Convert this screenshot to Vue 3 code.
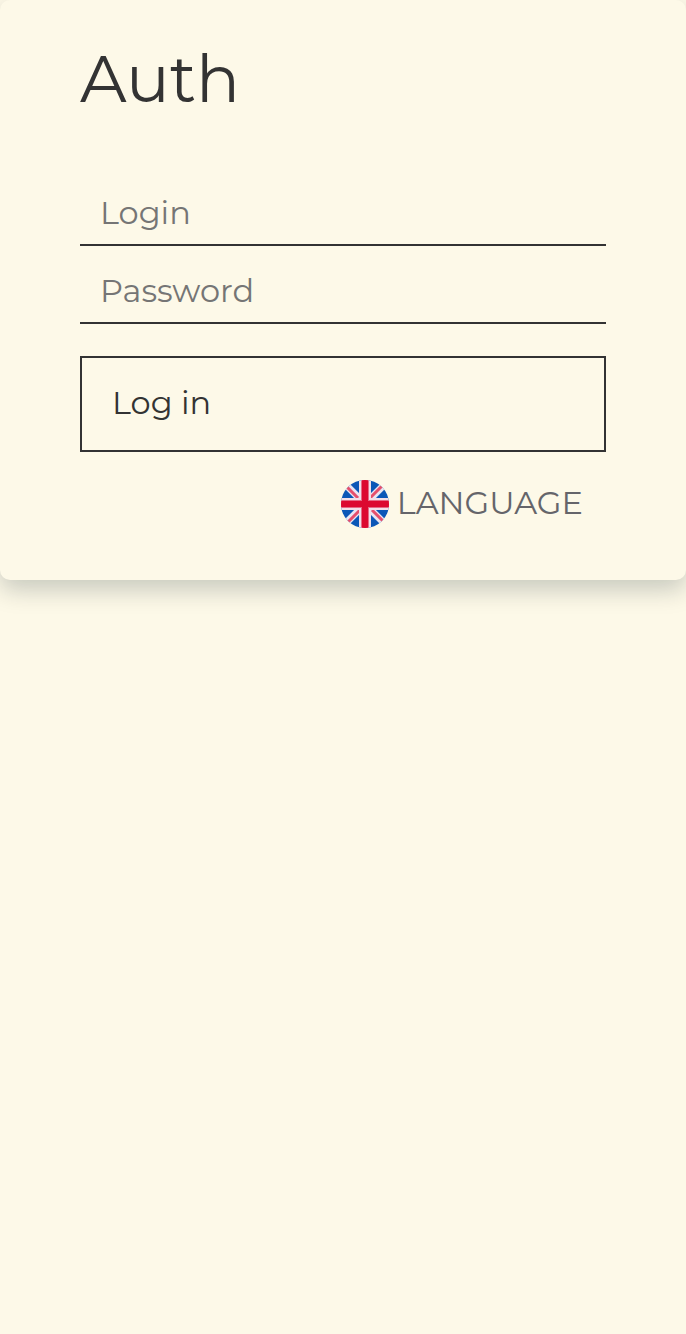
<script setup>
import { ref } from 'vue'

const login = ref('')
const password = ref('')
</script>

<template>
  <div class="page">
    <main class="card">
      <h1 class="title">Auth</h1>
      <form class="form" @submit.prevent>
        <input v-model="login" class="field" type="text" name="login" placeholder="Login" aria-label="Login" />
        <input v-model="password" class="field" type="password" name="password" placeholder="Password" aria-label="Password" />
        <button class="submit" type="submit">Log in</button>
      </form>
      <div class="footer">
        <button class="language" type="button">
          <svg class="flag" viewBox="0 0 48 48" aria-hidden="true">
            <defs>
              <clipPath id="flag-circle"><circle cx="24" cy="24" r="24" /></clipPath>
            </defs>
            <g clip-path="url(#flag-circle)">
              <rect width="48" height="48" fill="#0b57b7" />
              <path d="M3 3L45 45M45 3L3 45" stroke="#e9e6f2" stroke-width="7" />
              <path d="M6 7L17 18M42 41L31 30M41 6L29 18M7 42L19 30" stroke="#e5506d" stroke-width="3" />
              <path d="M24 0V48M0 24H48" stroke="#f2dfe8" stroke-width="12" />
              <path d="M24 0V48M0 24H48" stroke="#e66a85" stroke-width="8" />
              <path d="M24 0V48M0 24H48" stroke="#dc0930" stroke-width="6" />
            </g>
          </svg>
          <span>LANGUAGE</span>
        </button>
      </div>
    </main>
  </div>
</template>

<style>
body {
  background: #fdf9e8;
}
</style>

<style scoped>
.page {
  min-height: 100vh;
  background: #fdf9e8;
}

.card {
  box-sizing: border-box;
  padding: 40px 80px 52px;
  border-radius: 10px;
  background: #fdf9e8;
  box-shadow: 0 10px 24px rgba(0, 30, 40, 0.21);
  color: #333;
  font-family: Montserrat, Inter, sans-serif;
  font-weight: 400;
}

.title {
  margin: 0 0 60px;
  padding-bottom: 2px;
  font-size: 65px;
  font-weight: 400;
  line-height: 78px;
}

.form {
  display: flex;
  flex-direction: column;
}

.field {
  box-sizing: border-box;
  width: 100%;
  height: 66px;
  margin: 0 0 12px;
  padding: 0 20px;
  border: 0;
  border-bottom: 2px solid #333;
  border-radius: 0;
  outline: none;
  background: transparent;
  color: #333;
  font: inherit;
  font-size: 32px;
}

.field::placeholder {
  color: #757575;
  opacity: 1;
}

.submit {
  height: 96px;
  margin-top: 20px;
  padding: 0 30px 4px;
  border: 2px solid #333;
  background: transparent;
  color: #333;
  font: inherit;
  font-size: 32px;
  text-align: left;
}

.footer {
  display: flex;
  justify-content: flex-end;
  margin-top: 28px;
  padding-right: 23px;
}

.language {
  display: flex;
  align-items: center;
  gap: 8px;
  padding: 0;
  border: 0;
  background: transparent;
  color: #65656a;
  font: inherit;
  font-size: 32px;
  line-height: 46px;
}

.language span {
  padding-bottom: 2px;
}

.flag {
  width: 48px;
  height: 48px;
}
</style>
